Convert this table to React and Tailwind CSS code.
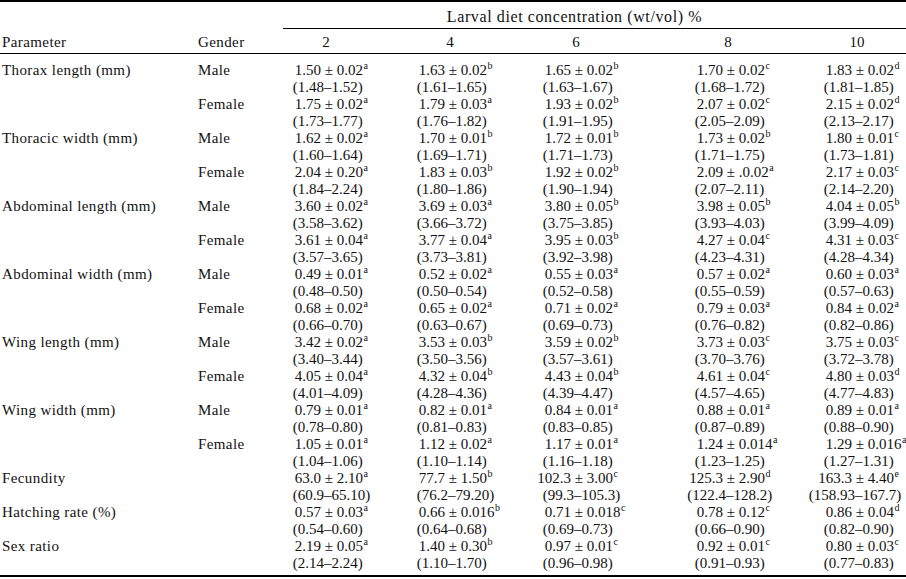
import React from "react";

const rows = [
  ["Thorax length (mm)", "Male", [["1.50","0.02","a","1.48","1.52"],["1.63","0.02","b","1.61","1.65"],["1.65","0.02","b","1.63","1.67"],["1.70","0.02","c","1.68","1.72"],["1.83","0.02","d","1.81","1.85"]]],
  ["", "Female", [["1.75","0.02","a","1.73","1.77"],["1.79","0.03","a","1.76","1.82"],["1.93","0.02","b","1.91","1.95"],["2.07","0.02","c","2.05","2.09"],["2.15","0.02","d","2.13","2.17"]]],
  ["Thoracic width (mm)", "Male", [["1.62","0.02","a","1.60","1.64"],["1.70","0.01","b","1.69","1.71"],["1.72","0.01","b","1.71","1.73"],["1.73","0.02","b","1.71","1.75"],["1.80","0.01","c","1.73","1.81"]]],
  ["", "Female", [["2.04","0.20","a","1.84","2.24"],["1.83","0.03","b","1.80","1.86"],["1.92","0.02","b","1.90","1.94"],["2.09",".0.02","a","2.07","2.11"],["2.17","0.03","c","2.14","2.20"]]],
  ["Abdominal length (mm)", "Male", [["3.60","0.02","a","3.58","3.62"],["3.69","0.03","a","3.66","3.72"],["3.80","0.05","b","3.75","3.85"],["3.98","0.05","b","3.93","4.03"],["4.04","0.05","b","3.99","4.09"]]],
  ["", "Female", [["3.61","0.04","a","3.57","3.65"],["3.77","0.04","a","3.73","3.81"],["3.95","0.03","b","3.92","3.98"],["4.27","0.04","c","4.23","4.31"],["4.31","0.03","c","4.28","4.34"]]],
  ["Abdominal width (mm)", "Male", [["0.49","0.01","a","0.48","0.50"],["0.52","0.02","a","0.50","0.54"],["0.55","0.03","a","0.52","0.58"],["0.57","0.02","a","0.55","0.59"],["0.60","0.03","a","0.57","0.63"]]],
  ["", "Female", [["0.68","0.02","a","0.66","0.70"],["0.65","0.02","a","0.63","0.67"],["0.71","0.02","a","0.69","0.73"],["0.79","0.03","a","0.76","0.82"],["0.84","0.02","a","0.82","0.86"]]],
  ["Wing length (mm)", "Male", [["3.42","0.02","a","3.40","3.44"],["3.53","0.03","b","3.50","3.56"],["3.59","0.02","b","3.57","3.61"],["3.73","0.03","c","3.70","3.76"],["3.75","0.03","c","3.72","3.78"]]],
  ["", "Female", [["4.05","0.04","a","4.01","4.09"],["4.32","0.04","b","4.28","4.36"],["4.43","0.04","b","4.39","4.47"],["4.61","0.04","c","4.57","4.65"],["4.80","0.03","d","4.77","4.83"]]],
  ["Wing width (mm)", "Male", [["0.79","0.01","a","0.78","0.80"],["0.82","0.01","a","0.81","0.83"],["0.84","0.01","a","0.83","0.85"],["0.88","0.01","a","0.87","0.89"],["0.89","0.01","a","0.88","0.90"]]],
  ["", "Female", [["1.05","0.01","a","1.04","1.06"],["1.12","0.02","a","1.10","1.14"],["1.17","0.01","a","1.16","1.18"],["1.24","0.014","a","1.23","1.25"],["1.29","0.016","a","1.27","1.31"]]],
  ["Fecundity", "", [["63.0","2.10","a","60.9","65.10"],["77.7","1.50","b","76.2","79.20"],["102.3","3.00","c","99.3","105.3"],["125.3","2.90","d","122.4","128.2"],["163.3","4.40","e","158.93","167.7"]]],
  ["Hatching rate (%)", "", [["0.57","0.03","a","0.54","0.60"],["0.66","0.016","b","0.64","0.68"],["0.71","0.018","c","0.69","0.73"],["0.78","0.12","c","0.66","0.90"],["0.86","0.04","d","0.82","0.90"]]],
  ["Sex ratio", "", [["2.19","0.05","a","2.14","2.24"],["1.40","0.30","b","1.10","1.70"],["0.97","0.01","c","0.96","0.98"],["0.92","0.01","c","0.91","0.93"],["0.80","0.03","c","0.77","0.83"]]],
];

const GRID = "grid grid-cols-[198px_61px_124px_126px_152px_129px_116px]";

function Cell({ v }) {
  const [m, sd, sup, lo, hi] = v;
  return (
    <div className="flex flex-col">
      <div className="flex whitespace-pre">
        <span className="w-[62px] shrink-0 text-right">{m}</span>
        <span>{" ± " + sd}</span>
        <span className="text-[10px] leading-[10px] relative top-[-1px] ml-[0.5px]">{sup}</span>
      </div>
      <div className="flex whitespace-pre">
        <span className="w-[65px] shrink-0 text-right">{"(" + lo}</span>
        <span>{"–" + hi + ")"}</span>
      </div>
    </div>
  );
}

export default function App() {
  const heads = ["2", "4", "6", "8", "10"];
  return (
    <div
      className="w-[906px] h-[579px] overflow-hidden bg-white text-[#111] text-[15px] leading-[17px]"
      style={{ fontFamily: '"Liberation Serif", "Times New Roman", serif' }}
    >
      <div className="border-t-2 border-black">
        <div className={GRID}>
          <div className="col-span-2" />
          <div className="col-span-5 pl-[24px]">
            <div className="border-b border-black pt-[6px] pb-[3px] pr-[40px] text-center text-[16px] tracking-[0.6px]">
              Larval diet concentration (wt/vol) %
            </div>
          </div>
        </div>
        <div className={GRID + " border-b border-black pt-[5px] pb-[2px]"}>
          <div className="pl-[2px] tracking-[0.4px]">Parameter</div>
          <div className="tracking-[0.4px]">Gender</div>
          {heads.map((h) => (
            <div key={h} className="w-[134px] text-center">{h}</div>
          ))}
        </div>
        <div className="pt-[8px] pb-[3px] border-b-2 border-black">
          {rows.map(([p, g, vals], i) => (
            <div key={i} className={GRID}>
              <div className="pl-[2px] tracking-[0.4px]">{p}</div>
              <div className="tracking-[0.4px]">{g}</div>
              {vals.map((v, j) => (
                <Cell key={j} v={v} />
              ))}
            </div>
          ))}
        </div>
      </div>
    </div>
  );
}
